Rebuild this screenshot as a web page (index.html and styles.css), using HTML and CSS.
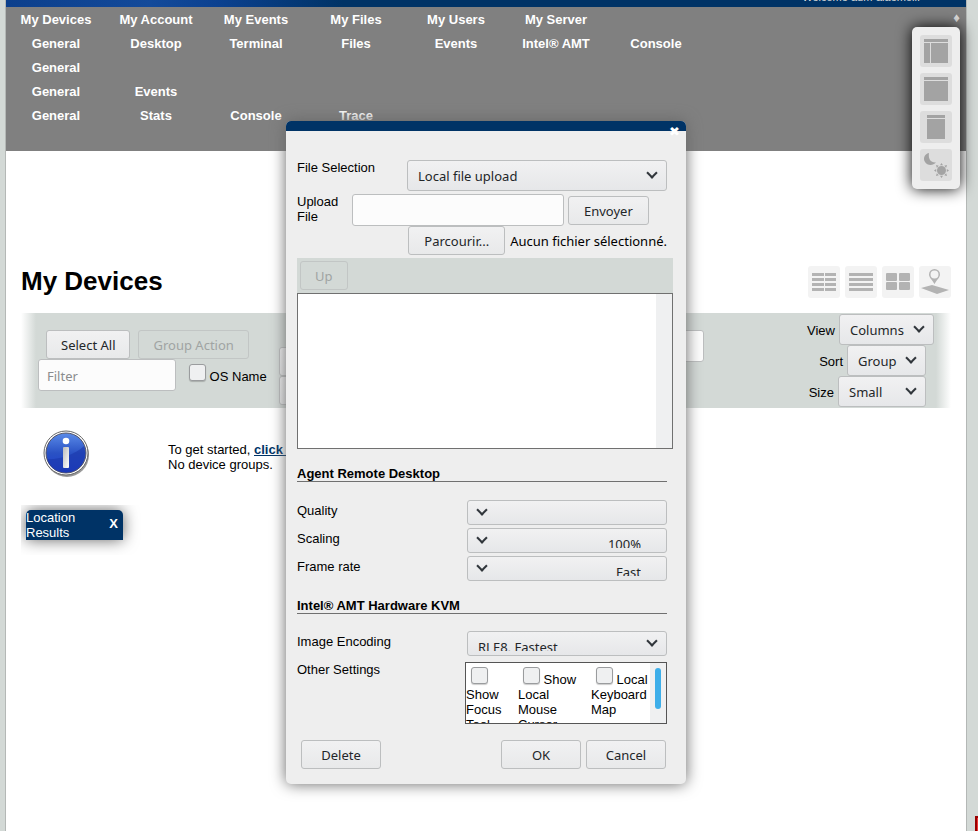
FILE: index.html
```html
<!DOCTYPE html>
<html lang="en">

<head>
  <meta charset="UTF-8">
  <meta name="viewport" content="width=device-width, initial-scale=1.0">
  <title>My Devices</title>
  <link rel="stylesheet" href="styles.css">
</head>

<body>
  <div class="container">
    <header class="masthead">
      <p class="welcome">Welcome adm-alaemoli.</p>
    </header>

    <nav class="menu">
      <div class="menu-row">
        <a href="#">My Devices</a>
        <a href="#">My Account</a>
        <a href="#">My Events</a>
        <a href="#">My Files</a>
        <a href="#">My Users</a>
        <a href="#">My Server</a>
      </div>
      <div class="menu-row">
        <a href="#">General</a>
        <a href="#">Desktop</a>
        <a href="#">Terminal</a>
        <a href="#">Files</a>
        <a href="#">Events</a>
        <a href="#">Intel® AMT</a>
        <a href="#">Console</a>
      </div>
      <div class="menu-row">
        <a href="#">General</a>
      </div>
      <div class="menu-row">
        <a href="#">General</a>
        <a href="#">Events</a>
      </div>
      <div class="menu-row">
        <a href="#">General</a>
        <a href="#">Stats</a>
        <a href="#">Console</a>
        <a href="#">Trace</a>
      </div>
      <span class="menu-toggle">♦</span>
    </nav>

    <!-- layout switcher -->
    <aside class="ui-menu">
      <button aria-label="Left bar">
        <svg viewBox="0 0 32 32"><path d="M4 4h24v3H4zM4 8h6v20H4zM11 8h17v20H11z"/></svg>
      </button>
      <button aria-label="Top bar">
        <svg viewBox="0 0 32 32"><path d="M4 4h24v3H4zM4 8h24v20H4z"/></svg>
      </button>
      <button aria-label="Fixed width">
        <svg viewBox="0 0 32 32"><path d="M7 4h18v3H7zM7 8h18v20H7z"/></svg>
      </button>
      <button aria-label="Night mode">
        <svg viewBox="0 0 32 32">
          <path d="M9 4C4 5 3 10 5 13C7 16.500 13 17 16 13.500C11 14 8 10 9 4z"/>
          <circle cx="21.500" cy="21.500" r="4.500"/>
          <path d="M21.500 14l1.500 2.200h-3zM21.500 29l1.500-2.200h-3zM14 21.500l2.200-1.500v3zM29 21.500l-2.200-1.500v3zM16 16l2.800.8-2 2zM27 16l-2.800.8 2 2zM16 27l2.800-.8-2-2zM27 27l-2.800-.8 2-2z"/>
        </svg>
      </button>
    </aside>

    <main>
      <div class="title-row">
        <h1>My Devices</h1>
        <div class="views">
          <button aria-label="Columns">
            <svg viewBox="0 0 32 32"><path d="M4 7h12v3H4zM17 7h11v3H17zM4 12h12v3H4zM17 12h11v3H17zM4 17h12v3H4zM17 17h11v3H17zM4 22h12v3H4zM17 22h11v3H17z"/></svg>
          </button>
          <button aria-label="List">
            <svg viewBox="0 0 32 32"><path d="M4 7h24v3H4zM4 12h24v3H4zM4 17h24v3H4zM4 22h24v3H4z"/></svg>
          </button>
          <button aria-label="Desktops">
            <svg viewBox="0 0 32 32"><rect x="4" y="7" width="11" height="8" rx="1"/><rect x="17" y="7" width="11" height="8" rx="1"/><rect x="4" y="16" width="11" height="8" rx="1"/><rect x="17" y="16" width="11" height="8" rx="1"/></svg>
          </button>
          <button aria-label="Map">
            <svg viewBox="0 0 32 32"><path fill-rule="evenodd" d="M15.500 3a5.500 5.500 0 0 0-5.500 5.500c0 3 3 5 5.500 9.500c2.500-4.500 5.500-6.500 5.500-9.500A5.500 5.500 0 0 0 15.500 3zm0 1.500a4 4 0 1 1 0 8a4 4 0 0 1 0-8z"/><path d="M2 22l11-3l17 5l-12 4z"/></svg>
          </button>
        </div>
      </div>

      <section class="toolbar">
        <div class="tools">
          <div class="tool-line buttons">
            <button class="btn">Select All</button>
            <button class="btn" disabled>Group Action</button>
          </div>
          <div class="tool-line">
            <input class="field filter" type="text" placeholder="Filter" aria-label="Filter">
            <label class="os-name"><input type="checkbox"> OS Name</label>
          </div>
        </div>
        <div class="tool-stack">
          <button class="btn">Expand</button>
          <button class="btn">Collapse</button>
        </div>
        <input class="field map-search" type="text" aria-label="Search location">
        <div class="sorting">
          <div class="sort-line wide">
            <label for="view">View</label>
            <span class="select"><select id="view"><option>Columns</option></select></span>
          </div>
          <div class="sort-line">
            <label for="sort">Sort</label>
            <span class="select sort"><select id="sort"><option>Group</option></select></span>
          </div>
          <div class="sort-line">
            <label for="size">Size</label>
            <span class="select size"><select id="size"><option>Small</option></select></span>
          </div>
        </div>
      </section>

      <section class="intro">
        <svg class="info" viewBox="0 0 48 48">
          <defs>
            <linearGradient id="ball" x1="0" y1="0" x2="0" y2="1">
              <stop offset="0" stop-color="#5b8be8"/>
              <stop offset=".5" stop-color="#2a52c4"/>
              <stop offset="1" stop-color="#1c3ccc"/>
            </linearGradient>
            <linearGradient id="stem" x1="0" y1="0" x2="1" y2="1">
              <stop offset="0" stop-color="#bbb"/>
              <stop offset="1" stop-color="#fff"/>
            </linearGradient>
          </defs>
          <circle cx="24" cy="25" r="22" fill="#999"/>
          <circle cx="23" cy="23" r="22" fill="#fff" stroke="#666"/>
          <circle cx="23" cy="23" r="20" fill="url(#ball)" stroke="#556"/>
          <path d="M4 29C14 30 32 25 41 16C45 29 37 42.500 23 42.500C13 42.500 6 37 4 29z" fill="#1a37aa" opacity=".6"/>
          <circle cx="23" cy="11" r="3.300" fill="#fff"/>
          <rect x="20" y="17" width="6" height="21" rx="1" fill="url(#stem)"/>
        </svg>
        <p>To get started, <a href="#">click here to create a device group</a>.<br>No device groups.</p>
      </section>

      <section class="results">
        <div class="results-tab">
          <span>Location Results</span>
          <button aria-label="Close results">X</button>
        </div>
      </section>
    </main>

    <div class="dialog" role="dialog" aria-label="Settings">
      <div class="dialog-head"><button aria-label="Close">✖</button></div>
      <form class="dialog-body">
        <div class="row">
          <label for="source">File Selection</label>
          <span class="select source"><select id="source"><option>Local file upload</option></select></span>
        </div>
        <div class="upload">
          <label for="path">Upload File</label>
          <input class="field path" id="path" type="text">
          <button class="btn" type="button">Envoyer</button>
        </div>
        <div class="browse">
          <button class="btn" type="button">Parcourir...</button>
          <span>Aucun fichier sélectionné.</span>
        </div>
        <div class="files">
          <div class="files-bar"><button class="btn" type="button" disabled>Up</button></div>
          <div class="files-list"></div>
        </div>

        <h2>Agent Remote Desktop</h2>
        <div class="row option">
          <label for="quality">Quality</label>
          <span class="select short rtl"><select id="quality"><option></option></select></span>
        </div>
        <div class="row option">
          <label for="scaling">Scaling</label>
          <span class="select short rtl"><select id="scaling"><option>100%</option></select></span>
        </div>
        <div class="row option">
          <label for="rate">Frame rate</label>
          <span class="select short rtl"><select id="rate"><option>Fast</option></select></span>
        </div>

        <h2>Intel® AMT Hardware KVM</h2>
        <div class="row option">
          <label for="encoding">Image Encoding</label>
          <span class="select short"><select id="encoding"><option>RLE8, Fastest</option></select></span>
        </div>
        <div class="row option">
          <span class="caption">Other Settings</span>
          <div class="settings">
            <label><input type="checkbox"> Show Focus Tool</label>
            <label><input type="checkbox"> Show Local Mouse Cursor</label>
            <label><input type="checkbox"> Local Keyboard Map</label>
            <div class="track"><div class="thumb"></div></div>
          </div>
        </div>

        <div class="actions">
          <button class="btn delete" type="button">Delete</button>
          <button class="btn" type="button">OK</button>
          <button class="btn" type="button">Cancel</button>
        </div>
      </form>
    </div>
  </div>
  <div class="corner"></div>
</body>

</html>
```
FILE: styles.css
```css
* {
  box-sizing: border-box;
}

body {
  margin: 0;
  background-color: #d3d9d6;
  color: #000;
  font: 13px/15px "Liberation Sans", Arial, sans-serif;
  overflow: hidden;
}

p,
h1,
h2 {
  margin: 0;
}

.container {
  position: relative;
  min-height: 100vh;
  margin: 0 11px 0 5px;
  border: solid #b4b8b6;
  border-width: 0 1px;
  background-color: #fff;
}

.masthead {
  display: flex;
  align-items: flex-end;
  justify-content: flex-end;
  height: 7px;
  padding: 0 46px 2px 0;
  overflow: hidden;
  background: linear-gradient(to right, #0c3f8c, #134a9a 15%, #0c4190 22%, #036 35%);
  color: #ddd;
}

.welcome {
  font-size: 11px;
}

/* menu */
.menu {
  position: relative;
  padding: 1px 0 23px;
  background-color: #808080;
}

.menu-row {
  display: grid;
  grid-template-columns: repeat(7, 100px);
}

.menu-row a {
  color: #fff;
  font-weight: bold;
  line-height: 24px;
  text-align: center;
  text-decoration: none;
}

.menu-toggle {
  position: absolute;
  top: 3px;
  right: 6px;
  color: #ddd;
}

.ui-menu {
  position: absolute;
  top: 27px;
  right: 6px;
  display: flex;
  flex-direction: column;
  gap: 6px;
  padding: 8px;
  border-radius: 5px;
  background-color: #eee;
  box-shadow: 0 0 15px #000;
}

.ui-menu button,
.views button {
  width: 32px;
  height: 32px;
  padding: 0;
  border: 0;
  border-radius: 3px;
  background-color: #ddd;
}

.ui-menu svg,
.views svg {
  display: block;
  fill: #a3a3a3;
}

/* page */
main {
  padding: 115px 15px 0;
}

.title-row {
  display: flex;
  justify-content: space-between;
  height: 47px;
}

h1 {
  font-size: 26px;
  line-height: 30px;
}

.views {
  display: flex;
  gap: 5px;
}

.views button {
  background-color: #f3f3f3;
}

.views svg {
  fill: #b3b3b3;
}

.btn,
select,
.field {
  border: 1px solid #bcbebf;
  border-radius: 3px;
  color: #232629;
  font: 13px/17px "Noto Sans", sans-serif;
}

.btn {
  height: 29px;
  padding: 2px 14px 0;
  background: linear-gradient(#f1f1f2, #e8e9ea);
}

.btn:disabled {
  border-color: #c2c6c5;
  background: transparent;
  color: #a0a4a3;
}

.field {
  height: 32px;
  padding: 2px 8px 0;
  background-color: #fcfcfc;
}

.field::placeholder {
  color: #8a8c8e;
}

input[type="checkbox"] {
  appearance: none;
  width: 17px;
  height: 17px;
  margin: 0;
  border: 1px solid #9a9c9e;
  border-radius: 3px;
  background-color: #eff0f1;
  box-shadow: 0 1px 1px rgba(0, 0, 0, .2);
}

.select {
  position: relative;
  display: block;
}

.select::after {
  position: absolute;
  top: 9px;
  right: 11px;
  width: 6px;
  height: 6px;
  border: solid #31363b;
  border-width: 0 2px 2px 0;
  content: "";
  transform: rotate(45deg);
  pointer-events: none;
}

select {
  appearance: none;
  display: block;
  width: 100%;
  height: 31px;
  padding: 2px 10px 0;
  background: linear-gradient(#f1f1f2, #e6e7e9);
}

.toolbar {
  display: flex;
  align-items: flex-start;
  height: 95px;
  padding-left: 17px;
  background: linear-gradient(to right, #fff, #d3d9d6 15px, #d3d9d6 calc(100% - 15px), #fff);
}

.tools {
  width: 241px;
  padding-top: 17px;
}

.tool-line {
  display: flex;
}

.tool-line.buttons {
  gap: 8px;
  padding-left: 8px;
}

.filter {
  width: 138px;
}

.os-name {
  padding: 5px 0 0 13px;
}

.tool-stack {
  display: flex;
  flex-direction: column;
  width: 90px;
  padding-top: 34px;
}

.map-search {
  width: 120px;
  margin: 17px 0 0 215px;
}

.sorting {
  margin-left: auto;
  padding: 1px 17px 0 0;
}

.sort-line {
  display: flex;
  align-items: center;
  justify-content: flex-end;
  gap: 4px;
  padding-right: 8px;
}

.sort-line.wide {
  padding-right: 0;
}

.sort-line label {
  padding-top: 2px;
}

.sort-line .select {
  width: 95px;
}

.sort-line .sort {
  width: 79px;
}

.sort-line .size {
  width: 88px;
}

.intro {
  display: flex;
  align-items: flex-start;
  gap: 77px;
  height: 97px;
  padding: 22px 0 0 22px;
}

.intro p {
  padding-top: 12px;
}

.intro a {
  color: #036;
  font-weight: bold;
}

.info {
  width: 48px;
  height: 48px;
}

.results {
  padding: 5px 5px 15px;
  overflow: hidden;
}

.results-tab {
  display: flex;
  align-items: center;
  justify-content: space-between;
  width: 97px;
  padding-right: 5px;
  border-radius: 5px 5px 0 0;
  background-color: #036;
  box-shadow: 0 0 15px #666;
  color: #fff;
}

.results-tab span {
  width: 60px;
}

.results-tab button {
  padding: 0 0 4px;
  border: 0;
  background: none;
  color: #fff;
  font: bold 13px/15px "Liberation Sans", Arial, sans-serif;
}

/* dialog */
.dialog {
  position: absolute;
  top: 121px;
  right: 0;
  left: 0;
  width: 400px;
  margin: 0 auto;
  border-radius: 5px;
  background-color: #eee;
  box-shadow: 0 0 15px #666;
}

.dialog-head {
  display: flex;
  justify-content: flex-end;
  height: 10px;
  padding-right: 6px;
  border-radius: 5px 5px 0 0;
  background-color: #036;
}

.dialog-head button {
  height: 22px;
  padding: 0;
  border: 0;
  background: none;
  color: #fff;
  font: 13px/22px "DejaVu Sans", sans-serif;
}

.dialog-body {
  padding: 29px 19px 15px 11px;
}

.row {
  display: flex;
  align-items: flex-start;
  justify-content: space-between;
  margin-bottom: 3px;
}

.row > label,
.caption {
  line-height: 16px;
}

.option > label,
.caption {
  padding-top: 3px;
}

.source {
  width: 260px;
}

.upload {
  display: flex;
  align-items: flex-start;
}

.upload label {
  width: 55px;
  padding-right: 10px;
}

.path {
  width: 212px;
  margin-right: 4px;
}

.upload .btn,
.browse .btn {
  padding: 2px 15px 0;
}

.upload .btn {
  margin-top: 2px;
}

.browse {
  display: flex;
  align-items: center;
  justify-content: flex-end;
  gap: 5px;
  margin-bottom: 3px;
  font: 13px/17px "Noto Sans", sans-serif;
  white-space: nowrap;
}

.browse span {
  padding-top: 2px;
}

.files {
  margin: 0 -6px 18px 0;
}

.files-bar {
  padding: 3px;
  background-color: #d3d9d6;
}

.files-bar .btn {
  display: block;
}

.files-list {
  height: 156px;
  border: 1px solid #707070;
  background: linear-gradient(#eff0f1, #eff0f1) right / 16px 100% no-repeat #fff;
}

h2 {
  margin-bottom: 18px;
  border-bottom: 1px solid #707070;
  font-size: 13px;
  line-height: 14px;
}

.row + h2 {
  margin: 18px 0 17px;
}

.row .short {
  width: 200px;
}

.short::after {
  top: 6px;
}

/* fixed height leaves less room than the text needs, so it is cut off */
.short select {
  height: 25px;
  padding: 7px 10px 4px;
}

.rtl select {
  padding-right: 25px;
  direction: rtl;
}

.rtl::after {
  right: auto;
  left: 11px;
}

.settings {
  display: grid;
  grid-template-columns: 52px 73px 59px 16px;
  width: 202px;
  height: 62px;
  margin-top: 3px;
  border: 1px solid #555;
  overflow: hidden;
  background-color: #fff;
}

.settings label {
  height: 60px;
  overflow: hidden;
}

.settings input {
  margin: 4px 0 0 5px;
}

.track {
  height: 60px;
  padding: 5px;
  background-color: #eff0f1;
}

.thumb {
  height: 41px;
  border-radius: 3px;
  background-color: #3daee9;
}

.actions {
  display: flex;
  gap: 5px;
  margin-top: 16px;
  padding: 0 1px 0 4px;
}

.actions .btn {
  width: 80px;
}

.actions .delete {
  margin-right: auto;
}

.corner {
  position: fixed;
  right: 0;
  bottom: 0;
  width: 3px;
  height: 15px;
  border: solid #900;
  border-width: 2px 0 0 2px;
  background-color: #e33;
}
```
